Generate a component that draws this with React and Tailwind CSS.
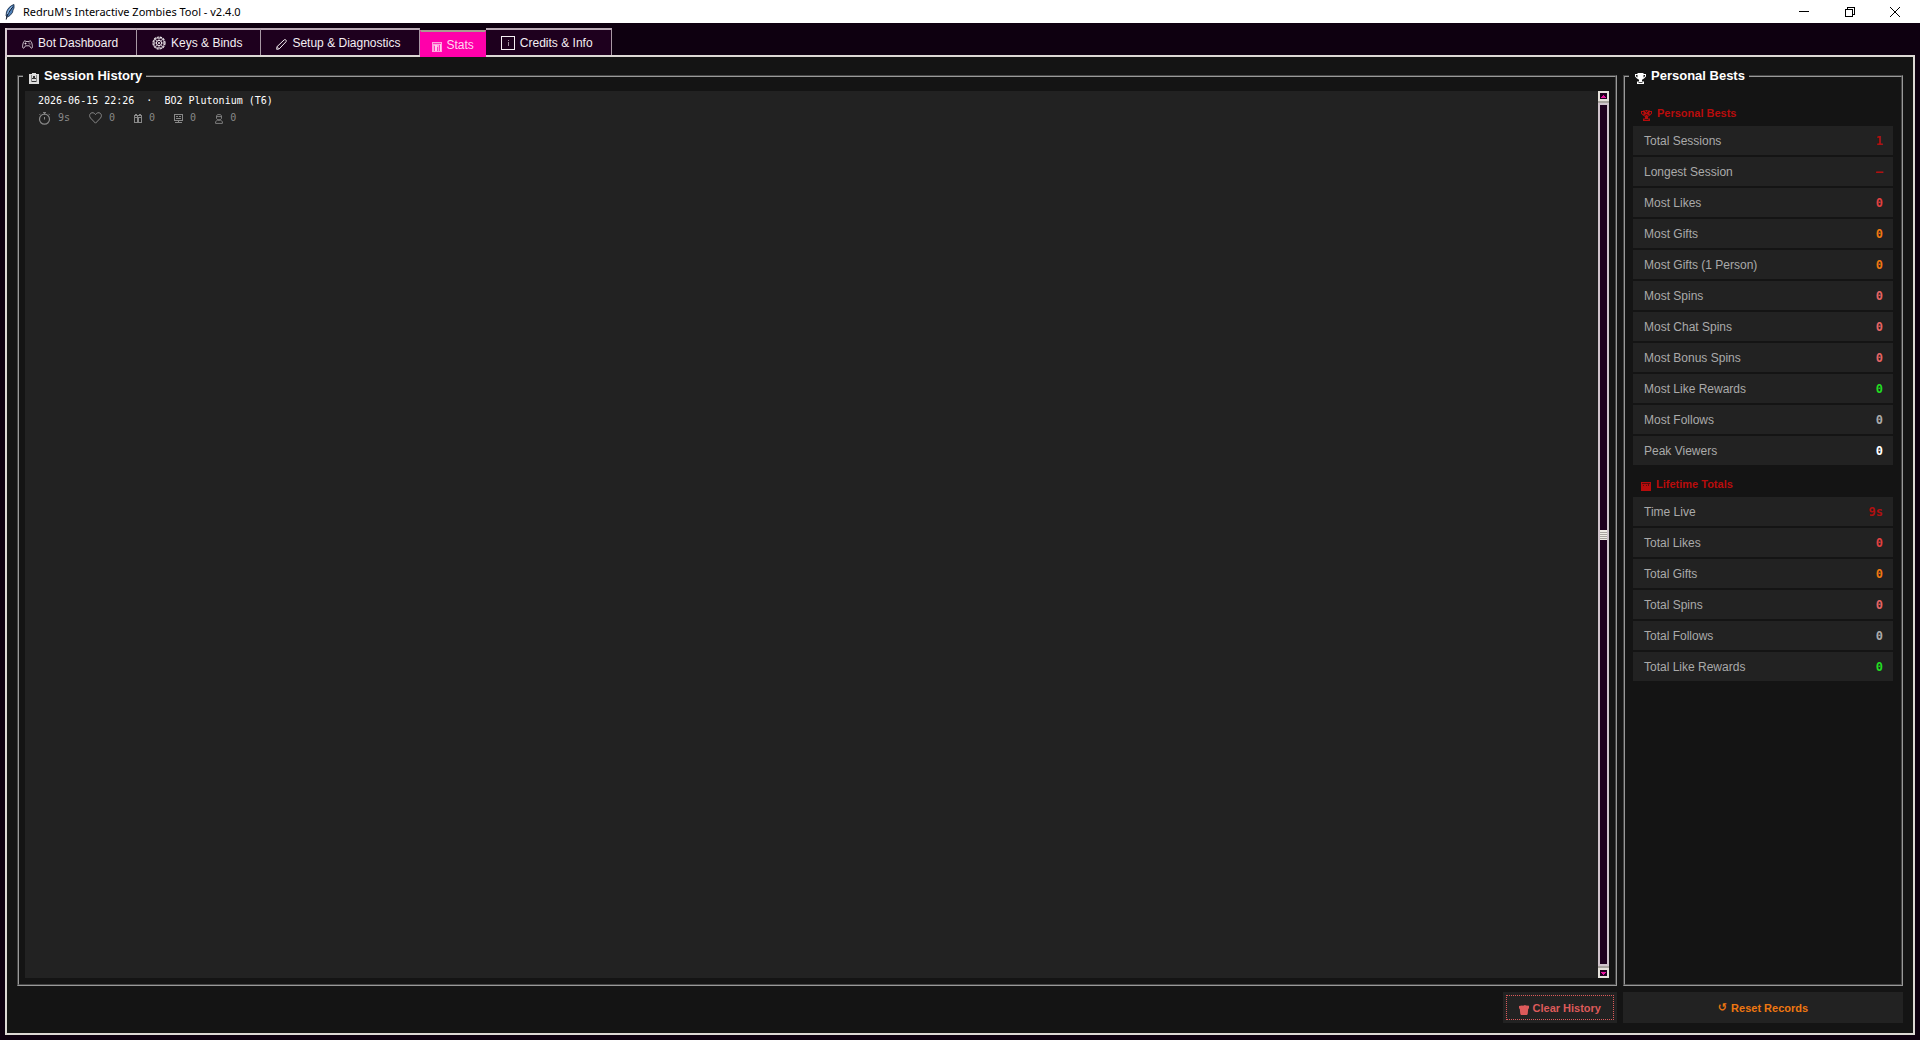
import React, { useState } from 'react';

const TABS = [
  { id: 'dashboard', label: 'Bot Dashboard', icon: GamepadIcon },
  { id: 'keys', label: 'Keys & Binds', icon: GearIcon },
  { id: 'setup', label: 'Setup & Diagnostics', icon: PencilIcon },
  { id: 'stats', label: 'Stats', icon: ChartIcon },
  { id: 'credits', label: 'Credits & Info', icon: InfoIcon },
];

const PERSONAL_BESTS = [
  { label: 'Total Sessions', value: '1', color: 'text-[#b01010]' },
  { label: 'Longest Session', value: '—', color: 'text-[#b01010]' },
  { label: 'Most Likes', value: '0', color: 'text-[#e04040]' },
  { label: 'Most Gifts', value: '0', color: 'text-[#ee7711]' },
  { label: 'Most Gifts (1 Person)', value: '0', color: 'text-[#ee7711]' },
  { label: 'Most Spins', value: '0', color: 'text-[#e46464]' },
  { label: 'Most Chat Spins', value: '0', color: 'text-[#e46464]' },
  { label: 'Most Bonus Spins', value: '0', color: 'text-[#e46464]' },
  { label: 'Most Like Rewards', value: '0', color: 'text-[#22dd22]' },
  { label: 'Most Follows', value: '0', color: 'text-[#aaaaaa]' },
  { label: 'Peak Viewers', value: '0', color: 'text-white' },
];

const LIFETIME = [
  { label: 'Time Live', value: '9s', color: 'text-[#b01010]' },
  { label: 'Total Likes', value: '0', color: 'text-[#e04040]' },
  { label: 'Total Gifts', value: '0', color: 'text-[#ee7711]' },
  { label: 'Total Spins', value: '0', color: 'text-[#e46464]' },
  { label: 'Total Follows', value: '0', color: 'text-[#aaaaaa]' },
  { label: 'Total Like Rewards', value: '0', color: 'text-[#22dd22]' },
];

const SESSION_STATS = [
  { id: 'time', value: '9s', icon: StopwatchIcon },
  { id: 'likes', value: '0', icon: HeartIcon },
  { id: 'gifts', value: '0', icon: GiftIcon },
  { id: 'spins', value: '0', icon: MonitorIcon },
  { id: 'follows', value: '0', icon: PersonIcon },
];

// --- icons ---
function FeatherIcon() {
  return (
    <svg width="10" height="16" viewBox="0 0 10 16" className="shrink-0">
      <path d="M9 0.5C5.5 1.5 2.5 4.5 1.5 8L1 12l1.5 1L5 11.5 7.5 8.5 8 6l1-2z" fill="#4d7fb8" stroke="#13233b" strokeWidth="0.8" />
      <path d="M8 2.5L4 8 2 12 1.2 15.5" fill="none" stroke="#101828" strokeWidth="1" />
      <path d="M7 2.5L3.5 7 2.5 10" fill="none" stroke="#a9cdf0" strokeWidth="0.9" />
    </svg>
  );
}

function GamepadIcon() {
  return (
    <svg width="11" height="9" viewBox="0 0 11 9" fill="none" stroke="currentColor" strokeWidth="0.8" className="mt-[3px]">
      <path d="M3 .8C1.5 .8 .6 4.5 .6 6.8c0 1.8 1.3 1.8 2 .4L3.5 5.8h4l.9 1.4c.7 1.4 2 1.4 2-.4C10.4 4.5 9.5 .8 8 .8L7 1.5H4z" />
      <path d="M2.5 3.5h2M3.5 2.5v2M7 2.6v1M8 3.6v1" />
    </svg>
  );
}

function GearIcon() {
  return (
    <svg width="14" height="14" viewBox="0 0 14 14" fill="none" stroke="currentColor">
      <circle cx="7" cy="7" r="6" strokeWidth="1.2" strokeDasharray="2.4 .74" />
      <circle cx="7" cy="7" r="5" strokeWidth=".7" />
      <circle cx="7" cy="7" r="2.6" strokeWidth="1" />
      <circle cx="7" cy="7" r="1" fill="currentColor" stroke="none" />
      <path d="M7 2v2.4M7 9.6V12M2 7h2.4M9.6 7H12M3.5 3.5l1.6 1.6M8.9 8.9l1.6 1.6M10.5 3.5L8.9 5.1M5.1 8.9l-1.6 1.6" strokeWidth=".7" />
    </svg>
  );
}

function PencilIcon() {
  return (
    <svg width="11" height="11" viewBox="0 0 11 11" fill="none" stroke="currentColor" strokeWidth="1" className="mt-[3px]">
      <path d="M.7 10.3l.3-2.6L8 1c.6-.6 1.4-.5 1.9 0s.5 1.3 0 1.9L3.2 9.9z" />
      <path d="M1 7.7l2.2 2.2" strokeWidth=".7" />
    </svg>
  );
}

function ChartIcon() {
  return (
    <svg width="10" height="10" viewBox="0 0 10 10" shapeRendering="crispEdges" className="mt-1">
      <rect width="10" height="10" fill="currentColor" opacity=".75" />
      <path d="M1 1h8v1H1zM2 4h1v5H2zM5 5h1v4H5zM7 3h1v6H7z" fill="#ff00aa" opacity=".65" />
      <path d="M3 3h2v6H3zM8 2h1v7H8z" fill="currentColor" opacity=".8" />
    </svg>
  );
}

function InfoIcon() {
  return (
    <svg width="14" height="14" viewBox="0 0 14 14" fill="none" stroke="currentColor" shapeRendering="crispEdges">
      <rect x=".5" y=".5" width="13" height="13" />
      <path d="M7.5 4v1M7.5 6v4" strokeWidth="1" opacity=".6" />
    </svg>
  );
}

function ClipboardIcon() {
  return (
    <svg width="10" height="11" viewBox="0 0 10 11" shapeRendering="crispEdges" className="mt-1">
      <path d="M0 1h3V0h4v1h3v10H0z" fill="#dddddd" />
      <path d="M4 3h2v2H4zM3 5h4v1H3zM3 8h4v1H3z" fill="#333333" />
      <path d="M2 2h1v7H2zM7 2h1v7H7z" fill="#888888" />
    </svg>
  );
}

function TrophyIcon({ cutout }) {
  return (
    <svg width="11" height="11" viewBox="0 0 11 11" className="mt-1">
      <path d="M2.5 0h6v1H11v2.5L9 5.5 7 6.8V8.5h2V11H2V8.5h2V6.8L2 5.5 0 3.5V1h2.5z" fill="currentColor" />
      <path d="M1 2h1.5v2.5L1 3.2zM8.5 2H10v1.2L8.5 4.5zM3.5 9.2h4v.9h-4z" fill="#141414" />
      {cutout && <path d="M3.5 0l2 2.5 2-2.5M3.5 5.5l2-1 2 1" fill="none" stroke="#141414" strokeWidth=".9" />}
    </svg>
  );
}

function CalendarIcon() {
  return (
    <svg width="10" height="9" viewBox="0 0 10 9" shapeRendering="crispEdges" className="mt-1">
      <rect width="10" height="9" fill="currentColor" />
      <path d="M1 1h8v1H1zM2 3h1v1H2zM5 3h1v1H5zM7 2h1v2H7z" fill="#5a0c0c" />
    </svg>
  );
}

function StopwatchIcon() {
  return (
    <svg width="13" height="13" viewBox="0 0 13 13" fill="none" stroke="currentColor">
      <circle cx="6.5" cy="7.2" r="5" strokeWidth="1.2" />
      <path d="M5 .6h3M6.5 .6v2M10.5 1.8l1 1M2.5 1.8l-1 1M6.5 5v2.5" />
    </svg>
  );
}

function HeartIcon() {
  return (
    <svg width="13" height="12" viewBox="0 0 13 12" fill="none" stroke="currentColor" strokeWidth="1">
      <path d="M6.5 11.2L1.5 6C.2 4.5 .4 2.4 1.7 1.3 3.2 .2 5.3 .6 6.5 2.6 7.7 .6 9.8 .2 11.3 1.3c1.3 1.1 1.5 3.2 .2 4.7z" />
    </svg>
  );
}

function GiftIcon() {
  return (
    <svg width="8" height="9" viewBox="0 0 8 9" fill="currentColor" shapeRendering="crispEdges" className="mt-px">
      <path d="M1 0h2v1H1zM5 0h2v1H5zM0 1h8v1H0zM0 2h1v1H0zM7 2h1v1H7zM0 3h8v1H0zM0 4h1v5H0zM7 4h1v5H7zM1 8h6v1H1zM3 1h1v8H3zM4 4h1v4H4z" />
    </svg>
  );
}

function MonitorIcon() {
  return (
    <svg width="9" height="9" viewBox="0 0 9 9" fill="currentColor" shapeRendering="crispEdges" className="mt-px">
      <path d="M0 0h9v1H0zM0 1h1v6H0zM8 1h1v6H8zM1 6h7v1H1zM2 2h2v1H2zM5 2h2v1H5zM2 4h5v1H2zM4 7h1v1H4zM1 8h7v1H1z" />
    </svg>
  );
}

function PersonIcon() {
  return (
    <svg width="8" height="10" viewBox="0 0 8 10" fill="none" stroke="currentColor" className="mt-px">
      <path d="M2.5 .6h3l1 1.4v2.4L5.3 5.8H2.7L1.5 4.4V2zM.6 9.4V7.6L2.5 6.2h3l1.9 1.4v1.8zM2 2.6h4" strokeWidth=".9" />
    </svg>
  );
}

function TrashIcon() {
  return (
    <svg width="10" height="10" viewBox="0 0 10 10" className="mt-1">
      <path d="M0 1l3-.6 1 .3L6 0l1 .6L10 .8v2.4L9.2 4 8.700 9 8 10H2l-.7-1L.8 4 0 3.200z" fill="currentColor" />
    </svg>
  );
}

// --- pieces ---
function TitleBar() {
  return (
    <header className="flex h-[23px] shrink-0 items-center bg-white pr-0.5 text-black">
      <div className="flex items-center gap-2 pl-[5px]">
        <FeatherIcon />
        <h1 className="font-['Noto_Sans','Open_Sans',sans-serif] text-[11px] leading-4">RedruM's Interactive Zombies Tool - v2.4.0</h1>
      </div>
      <div className="ml-auto flex h-full">
        <button aria-label="Minimize" className="flex w-[46px] items-center justify-center">
          <svg width="10" height="10" viewBox="0 0 10 10" shapeRendering="crispEdges"><path d="M0 4h10v1H0z" /></svg>
        </button>
        <button aria-label="Restore" className="flex w-[45px] items-center justify-center">
          <svg width="10" height="10" viewBox="0 0 10 10" fill="none" stroke="#000" shapeRendering="crispEdges"><path d="M.5 2.5h7v7h-7zM2.5 2V.5h7v7H8" /></svg>
        </button>
        <button aria-label="Close" className="flex w-[46px] items-center justify-center">
          <svg width="10" height="10" viewBox="0 0 10 10" stroke="#000"><path d="M0 0l10 10M10 0L0 10" /></svg>
        </button>
      </div>
    </header>
  );
}

function Scrollbar() {
  return (
    <div className="flex w-[11px] shrink-0 flex-col gap-0.5 bg-[#a8a39e]">
      <button aria-label="Scroll up" className="flex h-[10px] items-center justify-center border-2 border-[#e6e2dc] bg-[#1e001e]">
        <svg width="5" height="3" viewBox="0 0 5 3" shapeRendering="crispEdges" fill="#e6149c"><path d="M2 0h1v1h1v1h1v1H0V2h1V1h1z" /></svg>
      </button>
      <div className="flex flex-1 flex-col items-center justify-center border-2 border-[#d0c4cc] bg-[#1e001e]">
        <svg width="7" height="10" viewBox="0 0 7 10" shapeRendering="crispEdges">
          <rect width="7" height="10" fill="#f0ece6" />
          <path d="M0 2h7v1H0zM0 4h7v1H0zM0 6h7v1H0zM0 8h7v1H0z" fill="#a8a39e" />
        </svg>
      </div>
      <button aria-label="Scroll down" className="flex h-[10px] items-center justify-center border-2 border-[#e6e2dc] bg-[#1e001e]">
        <svg width="5" height="3" viewBox="0 0 5 3" shapeRendering="crispEdges" fill="#e6149c"><path d="M0 0h5v1H4v1H3v1H2V2H1V1H0z" /></svg>
      </button>
    </div>
  );
}

function Group({ icon, title, className, children }) {
  return (
    <fieldset className={`flex min-w-0 flex-1 border-2 border-[#999999] px-[6px] [border-style:groove] ${className}`}>
      <legend className="-ml-0.5 h-4 pr-1 pl-[6px] text-[13px] leading-4 font-bold text-white">
        <span className="flex items-center gap-[5px]">{icon}{title}</span>
      </legend>
      {children}
    </fieldset>
  );
}

function StatTable({ icon, title, rows }) {
  return (
    <section>
      <h2 className="flex h-[26px] items-center gap-[5px] pl-2 text-[11px] leading-4 font-bold text-[#b80c0c]">{icon}{title}</h2>
      <table className="w-full border-separate border-spacing-0">
        <tbody>
          {rows.map(row => (
            <tr key={row.label}>
              <th scope="row" className="h-[31px] border-b-2 border-[#141414] bg-[#222222] pl-[11px] text-left text-[12px] leading-4 font-normal text-[#aaaaaa]">{row.label}</th>
              <td className={`h-[31px] border-b-2 border-[#141414] bg-[#222222] pr-[10px] text-right font-['DejaVu_Sans_Mono',monospace] text-[12px] leading-4 font-bold ${row.color}`}>{row.value}</td>
            </tr>
          ))}
        </tbody>
      </table>
    </section>
  );
}

function Tab({ tab, active, onSelect }) {
  const Icon = tab.icon;
  const look = active
    ? 'mt-0.5 border-x border-x-[#ff00aa] border-t-[#a89a90] bg-[#ff00aa] px-[11px] text-[#ffd8f0]'
    : 'border-r border-x-[#a898a4] border-t-[#b8a8b4] bg-[#1e001e] pr-[18px] pl-[15px] text-[#f4eef2]';
  return (
    <button role="tab" aria-selected={active} onClick={onSelect} className={`flex h-[27px] items-center gap-[5px] border-t-2 text-[12px] leading-4 ${look}`}>
      <Icon />
      {tab.label}
    </button>
  );
}

export default function App() {
  const [tab, setTab] = useState('stats');

  return (
    <div className="flex min-h-screen flex-col bg-[#0e0010] font-['Liberation_Sans',Arial,sans-serif]">
      <TitleBar />

      <div className="flex flex-1 flex-col p-[5px]">
        <div role="tablist" className="z-10 -mb-0.5 flex items-start border-l-2 border-[#d8ccd2]">
          {TABS.map(t => (
            <Tab key={t.id} tab={t} active={t.id === tab} onSelect={() => setTab(t.id)} />
          ))}
        </div>

        <main className="flex flex-1 gap-1.5 border-2 border-[#dcd8d4] bg-[#141414] px-[10px] pt-[11px] pb-[10px]">
          <div className="flex min-w-0 flex-1 flex-col gap-1.5">
            <Group icon={<ClipboardIcon />} title="Session History" className="pt-[7px] pb-[6px]">
              <div className="min-w-0 flex-1 bg-[#222222] px-[13px] pt-0.5 font-['DejaVu_Sans_Mono',monospace] text-[10px] leading-4">
                <p className="whitespace-pre text-white">2026-06-15 22:26  ·  BO2 Plutonium (T6)</p>
                <ul className="flex gap-[19px] text-[#888888]">
                  {SESSION_STATS.map(({ id, value, icon: Icon }) => (
                    <li key={id} className="flex h-[18px] items-center gap-[7px]"><Icon />{value}</li>
                  ))}
                </ul>
              </div>
              <Scrollbar />
            </Group>
            <button className="flex h-[31px] items-center self-end bg-[#222222] p-[3px] text-[11px] leading-4 font-bold text-[#dd5a5a]">
              <span className="flex h-full items-center gap-1 border border-dotted border-[#dd5a5a] px-3"><TrashIcon />Clear History</span>
            </button>
          </div>

          <div className="flex w-[280px] shrink-0 flex-col gap-1.5">
            <Group icon={<TrophyIcon />} title="Personal Bests" className="pt-4 pb-2">
              <div className="flex flex-1 flex-col gap-1 px-0.5">
                <StatTable icon={<TrophyIcon cutout />} title="Personal Bests" rows={PERSONAL_BESTS} />
                <StatTable icon={<CalendarIcon />} title="Lifetime Totals" rows={LIFETIME} />
              </div>
            </Group>
            <button className="flex h-[31px] items-center justify-center gap-1 bg-[#222222] text-[11px] leading-4 font-bold text-[#ee7711]">
              <span className="font-['DejaVu_Sans',sans-serif]">↺</span>Reset Records
            </button>
          </div>
        </main>
      </div>
    </div>
  );
}
